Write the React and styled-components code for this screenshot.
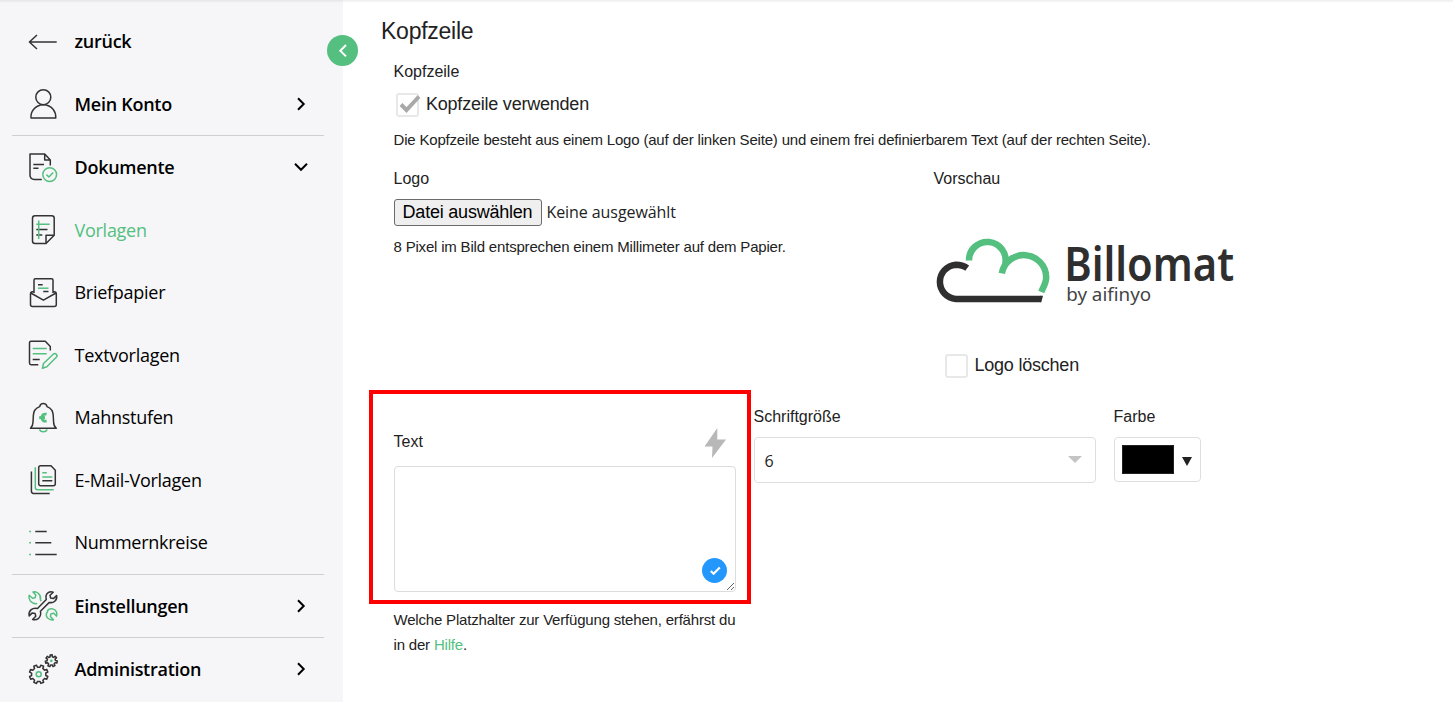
import React from "react";
import styled, { createGlobalStyle } from "styled-components";

const GREEN = "#54bf7f";
const DARK = "#333";

const GlobalStyle = createGlobalStyle`
  *, *::before, *::after { box-sizing: border-box; }
  body { margin: 0; background: #fff; color: #222; font-family: "Liberation Sans", Arial, sans-serif; overflow: hidden; }
`;

const Page = styled.div`
  position: relative;
  display: flex;
  height: 702px;
  &::before {
    content: "";
    position: absolute;
    inset: 0 0 auto;
    height: 3px;
    background: linear-gradient(rgba(0, 0, 0, 0.07), rgba(0, 0, 0, 0));
  }
`;

const Sidebar = styled.nav`
  flex: none;
  width: 343px;
  padding: 10px 19px 0 12px;
  background: #f6f6f8;
`;

const NavRow = styled.a`
  display: flex;
  align-items: flex-start;
  height: ${(p) => p.$h}px;
  padding: 16px 15px 0 16px;
  font-family: "Open Sans", "Noto Sans", sans-serif;
  font-size: 18px;
  line-height: 30px;
  font-weight: ${(p) => (p.$strong ? 600 : 400)};
  letter-spacing: -0.27px;
  color: ${(p) => (p.$active ? GREEN : "#000")};
`;

const NavLabel = styled.span`
  flex: 1;
  margin-left: 16.5px;
  white-space: nowrap;
`;

const Divider = styled.hr`
  height: 1px;
  margin: 0;
  border: 0;
  background: #cfcfd2;
`;

const IconSvg = styled.svg`
  flex: none;
  display: block;
  width: 30px;
  height: 30px;
  overflow: visible;
  fill: none;
  stroke: ${DARK};
  stroke-width: 1.5;
  stroke-linejoin: round;
  .g { stroke: ${GREEN}; }
`;

const Chevron = styled.svg`
  flex: none;
  width: 16px;
  height: 30px;
  fill: none;
  stroke: #000;
  stroke-width: 2;
`;

const Collapse = styled.button`
  position: absolute;
  left: 327px;
  top: 35px;
  width: 31px;
  height: 31px;
  padding: 0;
  border: 0;
  border-radius: 50%;
  background: ${GREEN};
  svg { display: block; width: 31px; height: 31px; fill: none; stroke: #fff; stroke-width: 2; }
`;

const Main = styled.main`
  flex: 1;
  padding: 16px 0 0 38px;
`;

const Title = styled.h1`
  margin: 0 0 16px;
  font-size: 23px;
  font-weight: 400;
  line-height: 30px;
  letter-spacing: -0.25px;
`;

const Body = styled.section`
  padding-left: 12.5px;
`;

const Label = styled.div`
  font-size: 16px;
  line-height: 20px;
`;

const Hint = styled.p`
  margin: 0;
  font-size: 15px;
  line-height: 25px;
  white-space: nowrap;
  letter-spacing: -0.188px;
  a { color: ${GREEN}; }
`;

const Check = styled.label`
  display: flex;
  align-items: flex-start;
  gap: 7px;
  height: 24px;
  margin: ${(p) => p.$m};
  font-size: 18px;
  line-height: 22px;
  letter-spacing: -0.22px;
`;

const Box = styled.span`
  position: relative;
  width: 23px;
  height: 24px;
  border: 2px solid #e8e8e8;
  border-radius: 3px;
  background: #fff;
  svg { position: absolute; left: 1px; top: -1px; width: 22px; height: 20px; fill: none; stroke: #a9a9a9; stroke-width: 4; }
`;

const LogoRow = styled.div`
  display: flex;
  height: 238px;
  margin-top: 17px;
`;

const Upload = styled.div`
  width: 540px;
`;

const FileLine = styled.div`
  display: flex;
  align-items: center;
  gap: 5px;
  margin: 10px 0 8px;
  font-family: "Open Sans", "Noto Sans", sans-serif;
  font-size: 16px;
  line-height: 25px;
  letter-spacing: -0.08px;
  height: 27px;
`;

const FileButton = styled.button`
  width: 148px;
  height: 27px;
  padding: 0 0 1px;
  border: 1px solid #6b6b6b;
  border-radius: 3px;
  background: #efefef;
  color: #000;
  font: 18px/24px "Liberation Sans", Arial, sans-serif;
  letter-spacing: -0.22px;
`;

const LogoImage = styled.svg`
  display: block;
  width: 302px;
  height: 80px;
  margin: 42px 0 43px;
  overflow: visible;
`;

const FormRow = styled.div`
  display: flex;
  gap: 18px;
`;

const TextColumn = styled.div`
  width: 342px;
`;

const TextHead = styled.div`
  display: flex;
  align-items: center;
  justify-content: space-between;
  height: 34px;
  margin-top: 19px;
  padding-right: 9px;
  ${Label} { padding-bottom: 3px; }
  svg { width: 24px; height: 32px; fill: #b8b8b8; }
`;

const AreaWrap = styled.div`
  position: relative;
  margin: 6px 0 15px;
`;

const Area = styled.textarea`
  display: block;
  width: 342px;
  height: 126px;
  border: 1px solid #dcdcdc;
  border-radius: 4px;
  resize: vertical;
  outline: 0;
`;

const Badge = styled.svg`
  position: absolute;
  right: 9px;
  bottom: 9px;
  width: 25px;
  height: 25px;
`;

const Field = styled.div`
  width: ${(p) => p.$w}px;
`;

const Control = styled.div`
  display: flex;
  align-items: center;
  justify-content: space-between;
  height: ${(p) => p.$h}px;
  margin-top: 10px;
  padding: ${(p) => p.$pad};
  border: 1px solid #dedede;
  border-radius: 4px;
  font-family: "Open Sans", "Noto Sans", sans-serif;
  font-size: 16px;
`;

const Value = styled.span`
  padding-top: 2px;
`;

const Triangle = styled.svg`
  display: block;
  width: ${(p) => p.$w}px;
  height: ${(p) => p.$h}px;
  fill: ${(p) => p.$c};
  margin-top: ${(p) => p.$shift}px;
`;

const Swatch = styled.span`
  width: 52px;
  height: 29px;
  border: 1px solid #222;
  background: #000;
`;

const Highlight = styled.div`
  position: absolute;
  left: 369px;
  top: 390px;
  width: 382px;
  height: 214px;
  border: 4px solid #f00;
  pointer-events: none;
`;

function gear(cx, cy, ro, ri, teeth, turn = 0) {
  const pts = [];
  const step = (Math.PI * 2) / teeth;
  const at = (r, a) => `${(cx + r * Math.cos(a)).toFixed(2)} ${(cy + r * Math.sin(a)).toFixed(2)}`;
  for (let i = 0; i < teeth; i++) {
    const a = i * step + turn;
    pts.push(at(ri, a - step * 0.28), at(ro, a - step * 0.2), at(ro, a + step * 0.2), at(ri, a + step * 0.28));
  }
  return `M${pts.join("L")}Z`;
}

const icons = {
  back: <path d="M28.7 16H1.4M9 9L1.4 16L9 23" />,
  user: <><circle cx="15.3" cy="8.2" r="7.5" /><path d="M3 29Q2.6 24 5.5 20.5Q9.5 15.7 15.3 15.7Q21.5 15.7 25.3 20.5Q28 24 27.8 29Z" /></>,
  docs: <><path d="M22.3 13.5V8L16.7 1.9H2V23Q2 27.4 6.5 27.4H13.8M16.7 2V7.9H22.3M5.3 12.4H16M5.3 16.3H10.5" /><circle className="g" cx="21.7" cy="22.6" r="6.9" /><path className="g" d="M18.4 22.6L20.9 25L25.2 20.4" /></>,
  template: <><path d="M18 28.5H7Q4.5 28.5 4.5 26V3.2Q4.5 .7 7 .7H23.7Q26.2 .7 26.2 3.2V20.3L18 28.5V20.3H26.2M8.3 14.4H19.5M8.3 20.1H14.3" /><path className="g" d="M10.7 5.5V24M8.3 9.2H21.7" /></>,
  letter: <><path d="M6 16V3Q6 1.7 7.3 1.7H23.7Q25 1.7 25 3V16M6 14.7L4.5 14.7Q2.5 14.7 2.5 17V27.5Q2.5 29.5 4.5 29.5H26.3Q28.3 29.5 28.3 27.5V17Q28.3 14.7 26.3 14.7H25M2.8 16L15.4 23.2L28 16M10 7.7H14.7M15.2 14.4H20.5" /><path className="g" d="M10 11.2H20.5" /></>,
  edit: <><path d="M22.3 10.5V6.5L17.3 1.3H3Q1.5 1.3 1.5 2.8V23Q1.5 24.7 3 24.7H10.3M4.7 19.4H11.7" /><path className="g" d="M4.7 8.5H18.7M4.7 13.8H18.7M14.4 28.3L15.5 23.5L25.2 14.2Q26.7 12.7 28.3 14.2Q29.8 15.7 28.3 17.2L18.8 26.8Z" /></>,
  bell: <><path d="M2.5 26.3H28.3Q25.6 24 25.6 20L25.2 13Q25 7 19 4.6Q18.4 1.5 15.3 1.5Q12.3 1.5 11.7 4.6Q5.6 7 5.4 13L5 20Q5 24 2.5 26.3Z" /><path className="g" d="M11.6 27.3Q12 29.7 15.3 29.7Q18.6 29.7 19 27.3" /><path className="g" strokeWidth="2.8" d="M18.6 12.2Q14 11.4 14 15.6Q14 19.8 18.6 19" /><path className="g" strokeWidth="3" d="M11.2 15.6H17" /></>,
  mail: <><path d="M12.7 .8H23L27.3 5.2V18.7Q27.3 20.7 25.3 20.7H12.7Q10.7 20.7 10.7 18.7V2.8Q10.7 .8 12.7 .8ZM14.3 15.8H24.3M3.4 6.5V26Q3.4 28.4 5.5 28.4H21.7" /><path className="g" d="M7.3 2.3V22.5Q7.3 24.7 9.5 24.7H25.7M14.3 7.7H18.8M14.3 12H24.3" /></>,
  list: <><path d="M7.3 4.4H18.7M7.3 15.7H23.3M7.3 27.4H28.7" /><path className="g" d="M1.2 4.4H3M1.2 15.7H3M1.2 27.4H3" /></>,
  tools: <><path d="M9.5 17.5L18.3 8.5Q17 4 20.2 1.7Q22.5 .1 25.2 1.2L22 4.3L22.6 7L25.4 7.6L28.6 4.6Q29.4 8 26.8 10.2Q24.5 12.2 21.3 11.4L12.4 20.3Q13.5 24.4 10.6 27.3Q8 29.3 4.6 28.5L7.8 25.2L7.1 22.5L4.3 21.9L1.2 24.9Q.3 21.5 2.9 18.9Q5.7 16.6 9.5 17.5Z" /><path className="g" d="M9.2 12.6Q4.7 13.2 2.2 9.9Q.3 7.4 1.2 4.3L4.5 7.2L7.2 6.7L7.8 4L5 1Q8 .3 10.5 2.5Q13.2 5 12.4 8.6L13.2 10.2M21.8 18Q19.5 18.4 19.4 21Q17 24 19.6 27Q22.3 29.5 25.4 28.7L22.4 25.4L23 22.8L25.8 22.2L28.5 25.1Q29.7 21.5 27 19Q24.5 17 21.8 18" /></>,
  gears: <><path d={gear(10.7, 20.3, 9.4, 7.2, 8, 0.39)} /><path d={gear(23.3, 6.8, 6, 4.2, 7, 0.2)} /><circle className="g" cx="10.7" cy="20.3" r="2.5" /><circle className="g" cx="23.3" cy="6.8" r=".6" /></>,
};

const Icon = ({ name }) => <IconSvg viewBox="0 0 30 30">{icons[name]}</IconSvg>;

const nav = [
  { icon: "back", label: "zurück", h: 63, strong: true },
  { icon: "user", label: "Mein Konto", h: 62, strong: true, chevron: "right", line: true },
  { icon: "docs", label: "Dokumente", h: 63, strong: true, chevron: "down" },
  { icon: "template", label: "Vorlagen", h: 62, active: true },
  { icon: "letter", label: "Briefpapier", h: 63 },
  { icon: "edit", label: "Textvorlagen", h: 62 },
  { icon: "bell", label: "Mahnstufen", h: 63 },
  { icon: "mail", label: "E-Mail-Vorlagen", h: 62 },
  { icon: "list", label: "Nummernkreise", h: 63, line: true },
  { icon: "tools", label: "Einstellungen", h: 62, strong: true, chevron: "right", line: true },
  { icon: "gears", label: "Administration", h: 62, strong: true, chevron: "right" },
];

function BillomatLogo() {
  return (
    <LogoImage viewBox="0 0 302 80">
      <g fill="none" strokeWidth="6.5">
        <path stroke={GREEN} d="M35 29.500A18.3 18.3 0 1 1 71.2 33" />
        <path stroke={GREEN} d="M67.8 42.3A22.4 22.4 0 0 1 112.2 46C112.3 52 109 56.5 107.3 61" />
        <path stroke="#2f2f2f" d="M33.2 37.2Q28.500 33.7 21.8 33.7A17.2 17.2 0 0 0 21.8 68H106.5" />
      </g>
      <path fill="#2f2f2f" d="M106 64.75H109L107.3 71.25H106Z" />
      <text x="130.2" y="50.3" fontFamily="Noto Sans, Open Sans, sans-serif" fontWeight="600" fontSize="46" fill="#2f2f2f" textLength="170" lengthAdjust="spacingAndGlyphs">Billomat</text>
      <text x="132.2" y="70.3" fontFamily="Noto Sans, Open Sans, sans-serif" fontSize="18.5" fill="#444" textLength="85" lengthAdjust="spacingAndGlyphs">by aifinyo</text>
    </LogoImage>
  );
}

export default function App() {
  return (
    <Page>
      <GlobalStyle />
      <Sidebar>
        {nav.map((n) => (
          <React.Fragment key={n.label}>
            <NavRow $h={n.h} $strong={n.strong} $active={n.active}>
              <Icon name={n.icon} />
              <NavLabel>{n.label}</NavLabel>
              {n.chevron && (
                <Chevron viewBox="0 0 16 30">
                  <path d={n.chevron === "right" ? "M5 9.3L10.7 15L5 20.7" : "M2 11.8L8 17.8L14 11.8"} />
                </Chevron>
              )}
            </NavRow>
            {n.line && <Divider />}
          </React.Fragment>
        ))}
      </Sidebar>
      <Main>
        <Title>Kopfzeile</Title>
        <Body>
          <Label>Kopfzeile</Label>
          <Check $m="11px 0 10px 2.5px">
            <Box><svg viewBox="0 0 22 20"><path d="M2 10.5L7.5 16L20 2.5" /></svg></Box>
            Kopfzeile verwenden
          </Check>
          <Hint>Die Kopfzeile besteht aus einem Logo (auf der linken Seite) und einem frei definierbarem Text (auf der rechten Seite).</Hint>
          <LogoRow>
            <Upload>
              <Label>Logo</Label>
              <FileLine>
                <FileButton>Datei auswählen</FileButton>
                <span>Keine ausgewählt</span>
              </FileLine>
              <Hint>8 Pixel im Bild entsprechen einem Millimeter auf dem Papier.</Hint>
            </Upload>
            <div>
              <Label>Vorschau</Label>
              <BillomatLogo />
              <Check $m="0 0 0 11px"><Box />Logo löschen</Check>
            </div>
          </LogoRow>
          <FormRow>
            <TextColumn>
              <TextHead>
                <Label>Text</Label>
                <svg viewBox="0 0 24 32"><path d="M14.3 1L1.5 19.5H9.5L9 31L23 12.5H14.3Z" /></svg>
              </TextHead>
              <AreaWrap>
                <Area />
                <Badge viewBox="0 0 25 25">
                  <circle cx="12.5" cy="12.5" r="12.5" fill="#2497fd" />
                  <path d="M8.8 13L11.6 15.7L17.8 9.5" fill="none" stroke="#fff" strokeWidth="2.2" />
                </Badge>
              </AreaWrap>
              <Hint>Welche Platzhalter zur Verfügung stehen, erfährst du<br />in der <a>Hilfe</a>.</Hint>
            </TextColumn>
            <Field $w={342}>
              <Label>Schriftgröße</Label>
              <Control $h={46} $pad="0 13px 0 10px">
                <Value>6</Value>
                <Triangle $w={14} $h={7} $c="#c4c4c4" $shift={-2} viewBox="0 0 14 7"><path d="M0 0H14L7 7Z" /></Triangle>
              </Control>
            </Field>
            <Field $w={87}>
              <Label>Farbe</Label>
              <Control $h={45} $pad="0 8px 0 7px">
                <Swatch />
                <Triangle $w={10} $h={9} $c="#222" $shift={4} viewBox="0 0 10 9"><path d="M0 0H10L5 9Z" /></Triangle>
              </Control>
            </Field>
          </FormRow>
        </Body>
      </Main>
      <Collapse><svg viewBox="0 0 31 31"><path d="M19 10L13.3 15.7L19 21.4" /></svg></Collapse>
      <Highlight />
    </Page>
  );
}
